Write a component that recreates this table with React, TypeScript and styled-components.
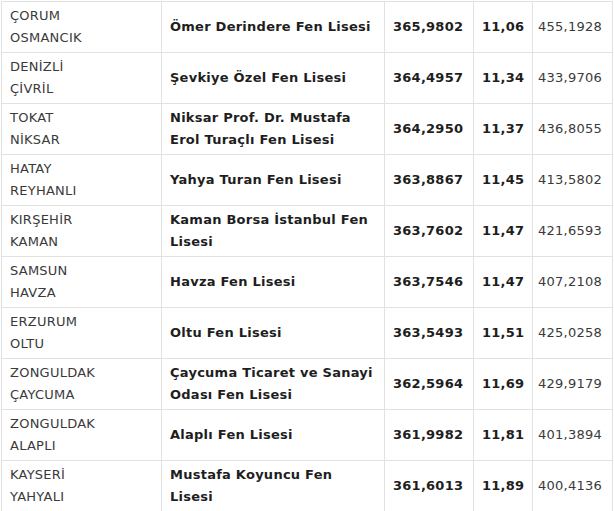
import React from 'react'
import styled, {createGlobalStyle} from 'styled-components'

const GlobalStyle = createGlobalStyle`
  body {
    margin: 0;
    background: #fff;
  }
`

const Table = styled.table`
  margin: 1px 0 0 1px;
  width: 611px;
  border-collapse: collapse;
  table-layout: fixed;
  font-family: 'DejaVu Sans', Verdana, sans-serif;
  font-size: 13px;
  line-height: 22px;
  letter-spacing: 0.25px;
  color: #333;
`

const Col = styled.col<{$w: number}>`
  width: ${({$w}) => $w}px;
`

const Cell = styled.td<{$bold?: boolean; $pad?: number}>`
  border: 1px solid #e2e2e2;
  padding: 3px ${({$pad}) => $pad ?? 8}px;
  height: 44px;
  vertical-align: middle;
  font-weight: ${({$bold}) => ($bold ? 700 : 400)};
  color: ${({$bold}) => ($bold ? '#1e1e1e' : '#3a3a3a')};
  white-space: ${({$bold}) => ($bold ? 'normal' : 'nowrap')};
`

type Row = {
  city: string
  district: string
  school: string
  score: string
  pct: string
  base: string
}

const widths = [160, 223, 89, 59, 80]

const rows: Row[] = [
  {city: 'ÇORUM', district: 'OSMANCIK', school: 'Ömer Derindere Fen Lisesi', score: '365,9802', pct: '11,06', base: '455,1928'},
  {city: 'DENİZLİ', district: 'ÇİVRİL', school: 'Şevkiye Özel Fen Lisesi', score: '364,4957', pct: '11,34', base: '433,9706'},
  {city: 'TOKAT', district: 'NİKSAR', school: 'Niksar Prof. Dr. Mustafa Erol Turaçlı Fen Lisesi', score: '364,2950', pct: '11,37', base: '436,8055'},
  {city: 'HATAY', district: 'REYHANLI', school: 'Yahya Turan Fen Lisesi', score: '363,8867', pct: '11,45', base: '413,5802'},
  {city: 'KIRŞEHİR', district: 'KAMAN', school: 'Kaman Borsa İstanbul Fen Lisesi', score: '363,7602', pct: '11,47', base: '421,6593'},
  {city: 'SAMSUN', district: 'HAVZA', school: 'Havza Fen Lisesi', score: '363,7546', pct: '11,47', base: '407,2108'},
  {city: 'ERZURUM', district: 'OLTU', school: 'Oltu Fen Lisesi', score: '363,5493', pct: '11,51', base: '425,0258'},
  {city: 'ZONGULDAK', district: 'ÇAYCUMA', school: 'Çaycuma Ticaret ve Sanayi Odası Fen Lisesi', score: '362,5964', pct: '11,69', base: '429,9179'},
  {city: 'ZONGULDAK', district: 'ALAPLI', school: 'Alaplı Fen Lisesi', score: '361,9982', pct: '11,81', base: '401,3894'},
  {city: 'KAYSERİ', district: 'YAHYALI', school: 'Mustafa Koyuncu Fen Lisesi', score: '361,6013', pct: '11,89', base: '400,4136'},
]

const App = () => (
  <>
    <GlobalStyle />
    <Table>
      <colgroup>
        {widths.map((w, i) => (
          <Col key={i} $w={w} />
        ))}
      </colgroup>
      <tbody>
        {rows.map((r, i) => (
          <tr key={i}>
            <Cell>
              {r.city}
              <br />
              {r.district}
            </Cell>
            <Cell $bold>{r.school}</Cell>
            <Cell $bold>{r.score}</Cell>
            <Cell $bold>{r.pct}</Cell>
            <Cell $pad={5}>{r.base}</Cell>
          </tr>
        ))}
      </tbody>
    </Table>
  </>
)

export default App
